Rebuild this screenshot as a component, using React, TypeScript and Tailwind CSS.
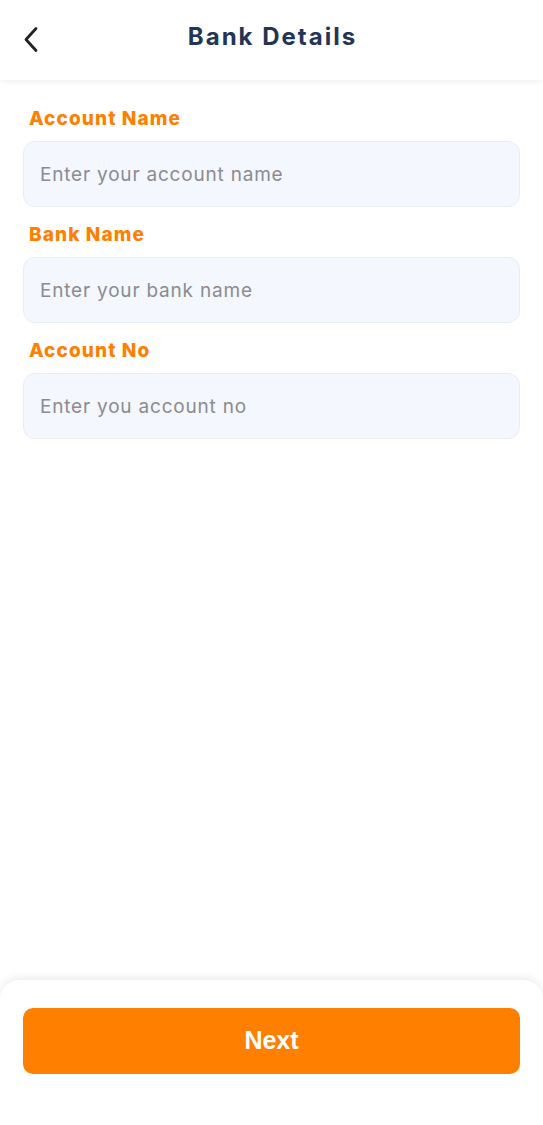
import * as React from "react";

const fields = [
  { label: "Account Name", placeholder: "Enter your account name" },
  { label: "Bank Name", placeholder: "Enter your bank name" },
  { label: "Account No", placeholder: "Enter you account no" },
];

export default function App() {
  return (
    <div className="flex h-[1125px] w-full flex-col bg-white font-['Inter','Noto_Sans',sans-serif]">
      <header className="relative flex h-[80px] shrink-0 items-center justify-center bg-white shadow-[0_2px_6px_rgba(0,0,0,0.06)]">
        <button className="absolute left-[18px] top-[21px] p-1 text-[#222]">
          <svg width="22" height="30" viewBox="0 0 22 30" fill="none">
            <path d="M14 3.5 L4 14.5 L14 25.5" stroke="currentColor" strokeWidth="2.8" strokeLinecap="round" strokeLinejoin="round" />
          </svg>
        </button>
        <h1 className="mb-[6px] ml-[2px] text-[24px] font-bold tracking-[2px] text-[#233556]">Bank Details</h1>
      </header>

      <main className="flex flex-col px-[23px] pt-[26px]">
        {fields.map((f, i) => (
          <div key={i} className="mb-[15px] flex flex-col">
            <label className="mb-[10px] pl-[6px] text-[19px] font-extrabold leading-[25px] tracking-[1.1px] text-[#ff8000]">{f.label}</label>
            <input
              placeholder={f.placeholder}
              className="h-[66px] w-full rounded-[12px] border border-[#e7ecf5] bg-[#f4f7fd] px-[16px] text-[19px] tracking-[0.8px] text-[#333] outline-none placeholder:text-[#8b8b90]"
            />
          </div>
        ))}
      </main>

      <footer className="mt-auto rounded-t-[20px] bg-white px-[23px] pb-[51px] pt-[28px] shadow-[0_-3px_8px_rgba(0,0,0,0.07)]">
        <button className="h-[66px] w-full rounded-[10px] bg-[#ff8000] font-['Liberation_Sans',sans-serif] text-[25px] font-bold text-white">
          Next
        </button>
      </footer>
    </div>
  );
}
